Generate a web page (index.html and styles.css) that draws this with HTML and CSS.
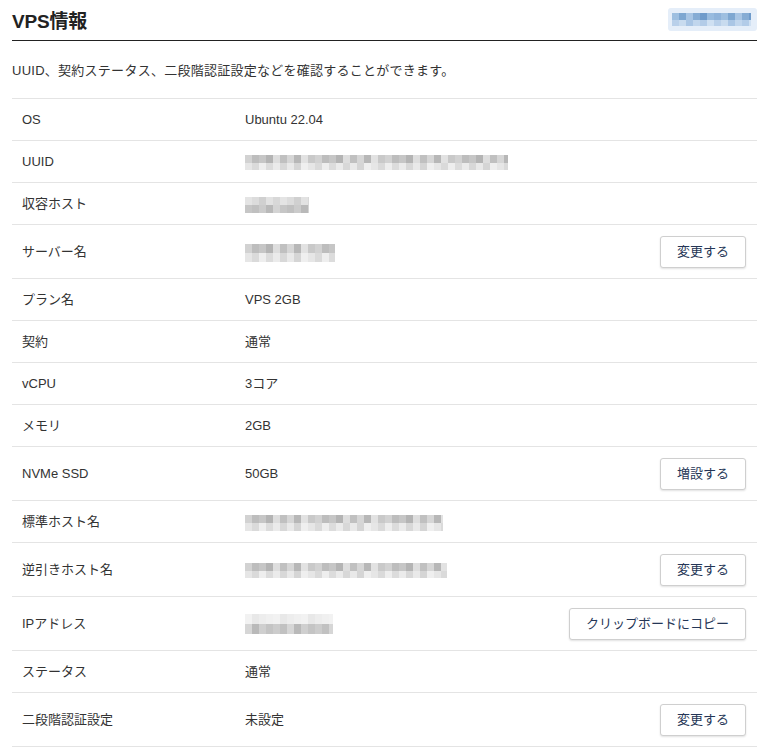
FILE: index.html
```html
<!DOCTYPE html>
<html lang="ja">
<head>
    <meta charset="UTF-8">
    <meta name="viewport" content="width=device-width, initial-scale=1.0">
    <title>VPS情報</title>
    <link rel="stylesheet" href="styles.css">
</head>
<body>
    <div class="container">
        <div class="page-header">
            <h1>VPS情報</h1>
            <span class="server-badge"><span class="mosaic mosaic-badge"></span></span>
        </div>

        <p class="lead">UUID、契約ステータス、二段階認証設定などを確認することができます。</p>

        <table class="info-table">
            <tr>
                <th>OS</th>
                <td>Ubuntu 22.04</td>
                <td class="action"></td>
            </tr>
            <tr>
                <th>UUID</th>
                <td><span class="mosaic mosaic-uuid"></span></td>
                <td class="action"></td>
            </tr>
            <tr>
                <th>収容ホスト</th>
                <td><span class="mosaic mosaic-host"></span></td>
                <td class="action"></td>
            </tr>
            <tr class="with-btn">
                <th>サーバー名</th>
                <td><span class="mosaic mosaic-name"></span></td>
                <td class="action"><button class="btn">変更する</button></td>
            </tr>
            <tr>
                <th>プラン名</th>
                <td>VPS 2GB</td>
                <td class="action"></td>
            </tr>
            <tr>
                <th>契約</th>
                <td>通常</td>
                <td class="action"></td>
            </tr>
            <tr>
                <th>vCPU</th>
                <td>3コア</td>
                <td class="action"></td>
            </tr>
            <tr>
                <th>メモリ</th>
                <td>2GB</td>
                <td class="action"></td>
            </tr>
            <tr class="with-btn">
                <th>NVMe SSD</th>
                <td>50GB</td>
                <td class="action"><button class="btn">増設する</button></td>
            </tr>
            <tr>
                <th>標準ホスト名</th>
                <td><span class="mosaic mosaic-fqdn"></span></td>
                <td class="action"></td>
            </tr>
            <tr class="with-btn">
                <th>逆引きホスト名</th>
                <td><span class="mosaic mosaic-ptr"></span></td>
                <td class="action"><button class="btn">変更する</button></td>
            </tr>
            <tr class="with-btn">
                <th>IPアドレス</th>
                <td><span class="mosaic mosaic-ip"></span></td>
                <td class="action"><button class="btn">クリップボードにコピー</button></td>
            </tr>
            <tr>
                <th>ステータス</th>
                <td>通常</td>
                <td class="action"></td>
            </tr>
            <tr class="with-btn">
                <th>二段階認証設定</th>
                <td>未設定</td>
                <td class="action"><button class="btn">変更する</button></td>
            </tr>
        </table>
    </div>
</body>
</html>
```
FILE: styles.css
```css
* {
    margin: 0;
    padding: 0;
    box-sizing: border-box;
}

body {
    background: #fff;
    color: #333;
    font-family: "Liberation Sans", "Noto Sans CJK JP", sans-serif;
    font-size: 13px;
}

.container {
    padding: 0 13px 0 12px;
}

.page-header {
    height: 41px;
    display: flex;
    align-items: center;
    justify-content: space-between;
    border-bottom: 1px solid #222;
}

h1 {
    font-size: 19px;
    font-weight: 700;
    color: #222;
    letter-spacing: -0.01em;
    padding-bottom: 2px;
}

.server-badge {
    display: flex;
    align-items: center;
    height: 23px;
    padding: 0 6px 0 4px;
    background: #e5eef9;
    border-radius: 3px;
    margin-bottom: 2px;
}

.lead {
    line-height: 20px;
    margin: 20px 0 17px;
    letter-spacing: 0.02em;
}

.info-table {
    width: 100%;
    border-collapse: collapse;
    border-top: 1px solid #e4e4e4;
}

.info-table tr {
    border-bottom: 1px solid #e4e4e4;
}

.info-table th,
.info-table td {
    padding: 10px;
    line-height: 21px;
    text-align: left;
    font-weight: 400;
    vertical-align: middle;
}

.info-table th {
    width: 223px;
}

.info-table .action {
    text-align: right;
    padding-right: 11px;
}

.info-table .with-btn .action {
    padding-top: 11px;
}

.btn {
    font-family: inherit;
    font-size: 13px;
    line-height: 20px;
    color: #253656;
    background: #fff;
    border: 1px solid #cfcfcf;
    border-radius: 3px;
    padding: 5px 16px;
    box-shadow: 0 1px 2px rgba(0, 0, 0, 0.12);
    cursor: pointer;
    vertical-align: middle;
}

/* pixelated placeholders for masked values */
.mosaic {
    display: inline-block;
    vertical-align: middle;
    height: 16px;
    background-repeat: no-repeat;
    background-size: 100% 8px, 100% 8px;
    background-position: 0 0, 0 8px;
    background-image:
        repeating-linear-gradient(90deg,
            #d2d2d2 0 7px, #bdbdbd 7px 14px, #c6c6c6 14px 21px, #b4b4b4 21px 28px,
            #dedede 28px 35px, #c0c0c0 35px 42px, #d6d6d6 42px 49px, #b7b7b7 49px 56px,
            #e2e2e2 56px 63px, #c9c9c9 63px 70px),
        repeating-linear-gradient(90deg,
            #e6e6e6 0 7px, #dadada 7px 14px, #eeeeee 14px 21px, #dcdcdc 21px 28px,
            #ebebeb 28px 35px, #d8d8d8 35px 42px, #e9e9e9 42px 49px, #d5d5d5 49px 56px,
            #efefef 56px 63px);
}

.mosaic-uuid {
    width: 263px;
    height: 15px;
    background-size: 100% 8px, 100% 7px;
}

.mosaic-host {
    width: 64px;
    background-image:
        repeating-linear-gradient(90deg,
            #e4e4e4 0 7px, #dcdcdc 7px 14px, #d0d0d0 14px 21px, #e2e2e2 21px 28px, #d8d8d8 28px 35px),
        repeating-linear-gradient(90deg,
            #c6c6c6 0 7px, #c0c0c0 7px 14px, #cbcbcb 14px 21px, #b9b9b9 21px 28px, #d4d4d4 28px 35px);
}

.mosaic-name {
    width: 90px;
    height: 18px;
    background-size: 100% 9px, 100% 9px;
    background-position: 0 0, 0 9px;
}

.mosaic-fqdn {
    width: 198px;
}

.mosaic-ptr {
    width: 202px;
    height: 15px;
    background-size: 100% 8px, 100% 7px;
}

.mosaic-ip {
    width: 88px;
    height: 20px;
    background-size: 100% 10px, 100% 10px;
    background-position: 0 0, 0 10px;
    background-image:
        repeating-linear-gradient(90deg,
            #f2f2f2 0 7px, #e8e8e8 7px 14px, #ededed 14px 21px, #f0f0f0 21px 28px),
        repeating-linear-gradient(90deg,
            #d6d6d6 0 7px, #b9b9b9 7px 14px, #cfcfcf 14px 21px, #c4c4c4 21px 28px,
            #cccccc 28px 35px, #c1c1c1 35px 42px);
}

.mosaic-badge {
    width: 79px;
    height: 13px;
    background-size: 100% 7px, 100% 6px;
    background-position: 0 0, 0 7px;
    background-image:
        repeating-linear-gradient(90deg,
            #9ebfe0 0 7px, #7ea7d1 7px 14px, #a8c5e4 14px 21px, #86acd4 21px 28px,
            #6f9bcb 28px 35px, #98bbdf 35px 42px, #8fb3da 42px 49px),
        repeating-linear-gradient(90deg,
            #b9d0ea 0 7px, #c8dbef 7px 14px, #aac6e5 14px 21px, #c1d6ed 21px 28px,
            #b3cce8 28px 35px, #cfe0f2 35px 42px);
}
```
